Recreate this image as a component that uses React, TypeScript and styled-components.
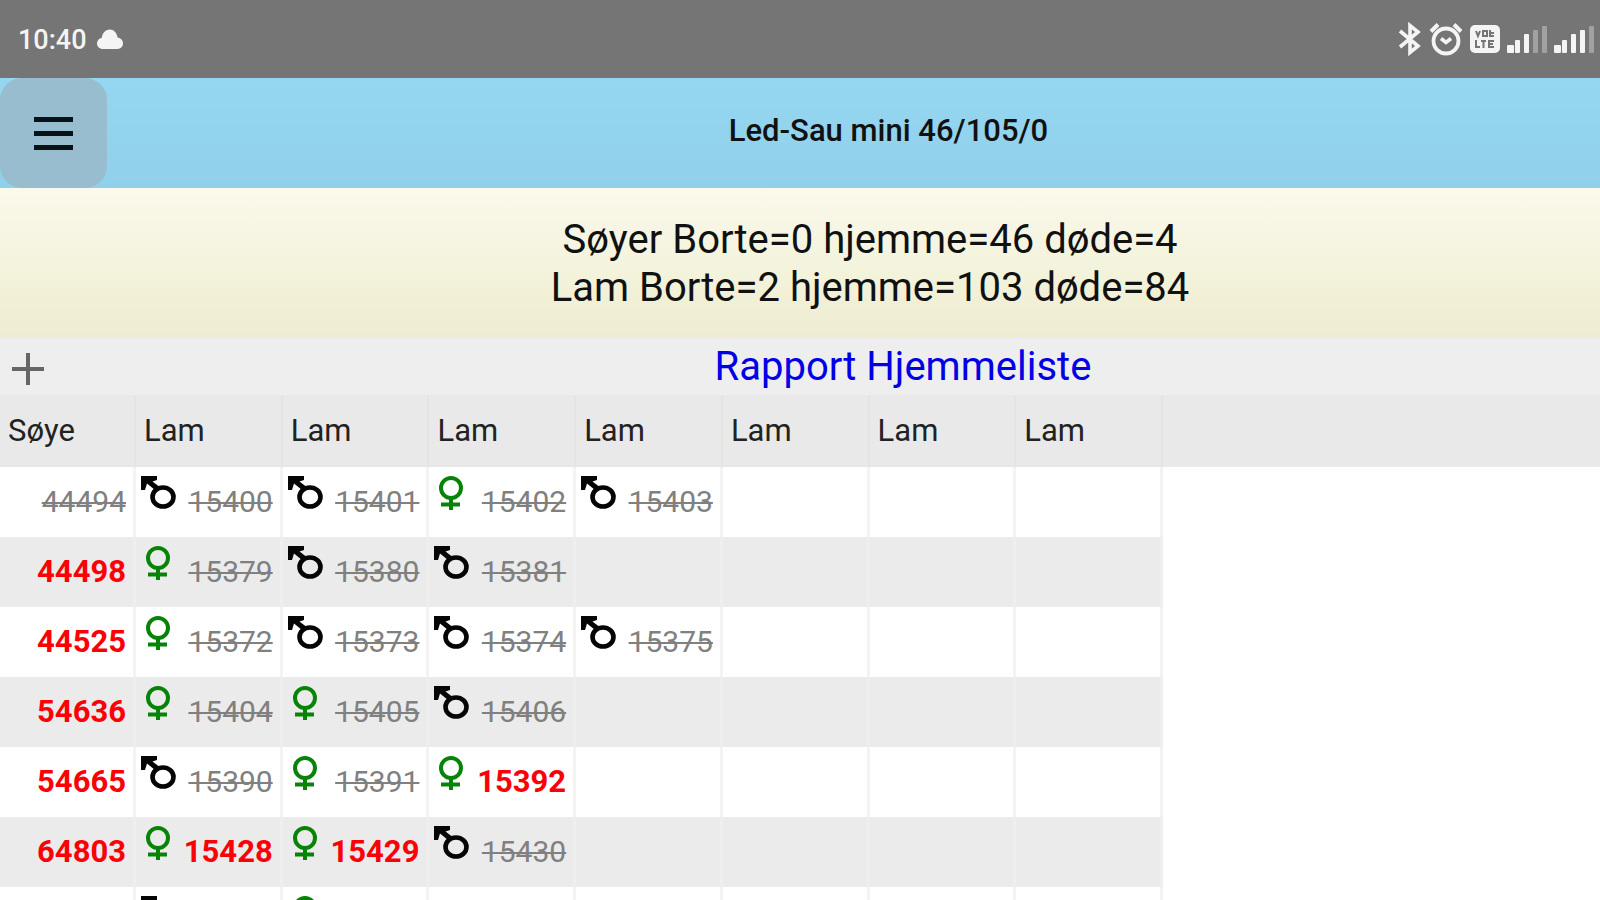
import React from "react";
import styled, { createGlobalStyle } from "styled-components";

const GlobalStyle = createGlobalStyle`
  *, *::before, *::after { box-sizing: border-box; }
  html, body { margin: 0; height: 100%; overflow: hidden; background: #fff; }
  body { font-family: Roboto, "Liberation Sans", sans-serif; color: #111; }
`;

const Screen = styled.div`
  display: flex;
  flex-direction: column;
  height: 100vh;
  overflow: hidden;
`;

const StatusBar = styled.div`
  display: flex;
  flex: none;
  align-items: center;
  justify-content: space-between;
  height: 78px;
  padding: 0 6px 0 18px;
  background: #757575;
  color: #f4f4f4;
`;

const StatusGroup = styled.div<{ $gap: number }>`
  display: flex;
  align-items: center;
  gap: ${(p) => p.$gap}px;
  svg { display: block; }
`;

const Clock = styled.time`
  padding-top: 2px;
  font-size: 27px;
  font-weight: 500;
  line-height: 32px;
`;

const AppBar = styled.header`
  display: flex;
  flex: none;
  align-items: center;
  height: 110px;
  background: linear-gradient(#95d6f1, #90d0ea);
`;

const MenuButton = styled.button`
  display: grid;
  place-content: center;
  gap: 9px;
  width: 107px;
  height: 110px;
  padding: 0;
  border: 0;
  border-radius: 22px;
  background: #97bdcf;
`;

const MenuLine = styled.span`
  width: 39px;
  height: 5px;
  background: #0b1216;
`;

const AppTitle = styled.h1`
  flex: 1;
  margin: 0;
  padding: 0 0 4px 70px;
  font-size: 31px;
  font-weight: 500;
  line-height: 36px;
  text-align: center;
`;

const Summary = styled.section`
  flex: none;
  height: 150px;
  padding: 28px 0 0 140px;
  background: linear-gradient(#faf9ec, #f3f2da 60%, #eeecd1);
`;

const SummaryLine = styled.p`
  margin: 0;
  font-size: 40px;
  line-height: 48px;
  text-align: center;
`;

const ReportBar = styled.div`
  display: flex;
  flex: none;
  align-items: center;
  height: 57px;
  padding-left: 8px;
  background: #eeeeee;
`;

const AddButton = styled.button`
  display: grid;
  place-items: center;
  width: 40px;
  height: 40px;
  padding: 4px 0 0;
  border: 0;
  background: none;
  svg { display: block; }
`;

const ReportTitle = styled.h2`
  flex: 1;
  margin: 0;
  padding-left: 158px;
  color: #0000e6;
  font-size: 40px;
  font-weight: 400;
  line-height: 48px;
  text-align: center;
`;

const Table = styled.table`
  width: 100%;
  table-layout: fixed;
  border-collapse: separate;
  border-spacing: 0;
`;

const EweCol = styled.col`width: 8.5%;`;
const LambCol = styled.col`width: 9.17%;`;

const HeadCell = styled.th`
  height: 72px;
  padding: 2px 0 0 8px;
  border-right: 2px solid #e4e4e4;
  border-bottom: 2px solid #e6e6e6;
  background: #e9e9e9;
  color: #222;
  font-size: 31px;
  font-weight: 400;
  line-height: 36px;
  text-align: left;
`;

const HeadFiller = styled.td`
  background: #e9e9e9;
`;

const Row = styled.tr<{ $shaded: boolean }>`
  --cell: ${(p) => (p.$shaded ? "#ebebeb" : "#ffffff")};
  --line: ${(p) => (p.$shaded ? "#eeeeee" : "#f3f3f3")};
`;

const Cell = styled.td`
  height: 70px;
  padding: 0 7px 0 4px;
  border-right: 3px solid var(--line);
  background: var(--cell);
`;

const Entry = styled.div`
  display: flex;
  align-items: center;
  justify-content: flex-end;
  height: 70px;
  svg { display: block; margin: 8px auto 0 0; align-self: flex-start; }
`;

const Tag = styled.span<{ $alive: boolean }>`
  color: ${(p) => (p.$alive ? "#fb0007" : "#808080")};
  font-size: ${(p) => (p.$alive ? 31 : 30)}px;
  font-weight: ${(p) => (p.$alive ? 700 : 400)};
  line-height: 36px;
  text-decoration: ${(p) => (p.$alive ? "none" : "line-through 2px")};
`;

type Sex = "m" | "f";
type Lamb = { sex: Sex; tag?: string; alive?: boolean };
type Ewe = { tag?: string; alive?: boolean; lambs: Lamb[] };

const m = (tag?: string): Lamb => ({ sex: "m", tag });
const f = (tag?: string, alive = false): Lamb => ({ sex: "f", tag, alive });

const ewes: Ewe[] = [
  { tag: "44494", lambs: [m("15400"), m("15401"), f("15402"), m("15403")] },
  { tag: "44498", alive: true, lambs: [f("15379"), m("15380"), m("15381")] },
  { tag: "44525", alive: true, lambs: [f("15372"), m("15373"), m("15374"), m("15375")] },
  { tag: "54636", alive: true, lambs: [f("15404"), f("15405"), m("15406")] },
  { tag: "54665", alive: true, lambs: [m("15390"), f("15391"), f("15392", true)] },
  { tag: "64803", alive: true, lambs: [f("15428", true), f("15429", true), m("15430")] },
  { lambs: [m(), f()] },
];

const lambColumns = [0, 1, 2, 3, 4, 5, 6];

const SexIcon = ({ sex }: { sex: Sex }) =>
  sex === "m" ? (
    <svg width="38" height="36" viewBox="0 0 38 36" fill="none" stroke="#050505" role="img" aria-label="male">
      <path d="M1 1H17V5L12.500 6.500L19 11.500L15 15L7 8.500L5 15H1Z" fill="#050505" stroke="none" />
      <ellipse cx="23" cy="22" rx="10.500" ry="9.500" strokeWidth="4.600" />
    </svg>
  ) : (
    <svg width="38" height="36" viewBox="0 0 38 36" fill="none" stroke="#078307" strokeWidth="4" role="img" aria-label="female">
      <ellipse cx="18" cy="13" rx="10" ry="10" />
      <path d="M18 23V35M8 29.500H27" />
    </svg>
  );

const Cloud = () => (
  <svg width="26" height="20" viewBox="0 0 26 20" fill="#f4f4f4">
    <path d="M6 20C2.500 20 0 17.500 0 14.500C0 11.500 2 9.300 4.700 9C5.500 4 8.500 .5 12.800 .5C16.800 .5 19.700 3.500 20.600 8.500C23.800 9 26 11.300 26 14.300C26 17.500 23.700 20 20.500 20Z" />
  </svg>
);

const Bluetooth = () => (
  <svg width="24" height="34" viewBox="0 0 24 34" fill="none" stroke="#f4f4f4" strokeWidth="3.600">
    <path d="M2 9L20 24L12 30.500V3.500L20 10L2 25" />
  </svg>
);

const Alarm = () => (
  <svg width="34" height="34" viewBox="0 0 34 34" fill="none" stroke="#f4f4f4">
    <circle cx="17" cy="19" r="12.500" strokeWidth="3.800" />
    <path d="M2 9.500L9 2.500M32 9.500L25 2.500" strokeWidth="4" />
    <path d="M12 16.500L17 20.500L22 16.500" strokeWidth="3.600" />
  </svg>
);

const VoLte = () => (
  <svg width="30" height="28" viewBox="0 0 30 28">
    <rect width="30" height="28" rx="5" fill="#f4f4f4" />
    <g fill="none" stroke="#757575" strokeWidth="2">
      <path d="M6 6L8 11L10 6M13 6H17V11H13ZM20 5V11H24M20 8H24" />
      <path d="M6 15V22H10M11 16H16M13.500 16V23M24 16H19V22H24M19 19H23" />
    </g>
  </svg>
);

const Signal = ({ level }: { level: number }) => (
  <svg width="40" height="28" viewBox="0 0 40 28" fill="#f4f4f4">
    {[8, 13, 19, 23, 27].map((h, i) => (
      <rect key={h} x={i === 0 ? 0 : i * 9 - 1} y={28 - h} width={i === 0 ? 7 : 5} height={h} rx="1" opacity={i < level ? 1 : 0.35} />
    ))}
  </svg>
);

export default function App() {
  return (
    <Screen>
      <GlobalStyle />
      <StatusBar>
        <StatusGroup $gap={10}>
          <Clock>10:40</Clock>
          <Cloud />
        </StatusGroup>
        <StatusGroup $gap={7}>
          <Bluetooth />
          <Alarm />
          <VoLte />
          <Signal level={3} />
          <Signal level={4} />
        </StatusGroup>
      </StatusBar>
      <AppBar>
        <MenuButton type="button" aria-label="Menu">
          <MenuLine />
          <MenuLine />
          <MenuLine />
        </MenuButton>
        <AppTitle>Led-Sau mini 46/105/0</AppTitle>
      </AppBar>
      <Summary>
        <SummaryLine>Søyer Borte=0 hjemme=46 døde=4</SummaryLine>
        <SummaryLine>Lam Borte=2 hjemme=103 døde=84</SummaryLine>
      </Summary>
      <ReportBar>
        <AddButton type="button" aria-label="Add">
          <svg width="32" height="32" viewBox="0 0 32 32" stroke="#666" strokeWidth="4">
            <path d="M16 0V32M0 16H32" />
          </svg>
        </AddButton>
        <ReportTitle>Rapport Hjemmeliste</ReportTitle>
      </ReportBar>
      <Table>
        <colgroup>
          <EweCol />
          {lambColumns.map((c) => (
            <LambCol key={c} />
          ))}
          <col />
        </colgroup>
        <thead>
          <tr>
            <HeadCell scope="col">Søye</HeadCell>
            {lambColumns.map((c) => (
              <HeadCell key={c} scope="col">Lam</HeadCell>
            ))}
            <HeadFiller />
          </tr>
        </thead>
        <tbody>
          {ewes.map((ewe, i) => (
            <Row key={i} $shaded={i % 2 === 1}>
              <Cell>
                <Entry>{ewe.tag && <Tag $alive={!!ewe.alive}>{ewe.tag}</Tag>}</Entry>
              </Cell>
              {lambColumns.map((c) => {
                const lamb = ewe.lambs[c];
                return (
                  <Cell key={c}>
                    {lamb && (
                      <Entry>
                        <SexIcon sex={lamb.sex} />
                        {lamb.tag && <Tag $alive={!!lamb.alive}>{lamb.tag}</Tag>}
                      </Entry>
                    )}
                  </Cell>
                );
              })}
              <td />
            </Row>
          ))}
        </tbody>
      </Table>
    </Screen>
  );
}
